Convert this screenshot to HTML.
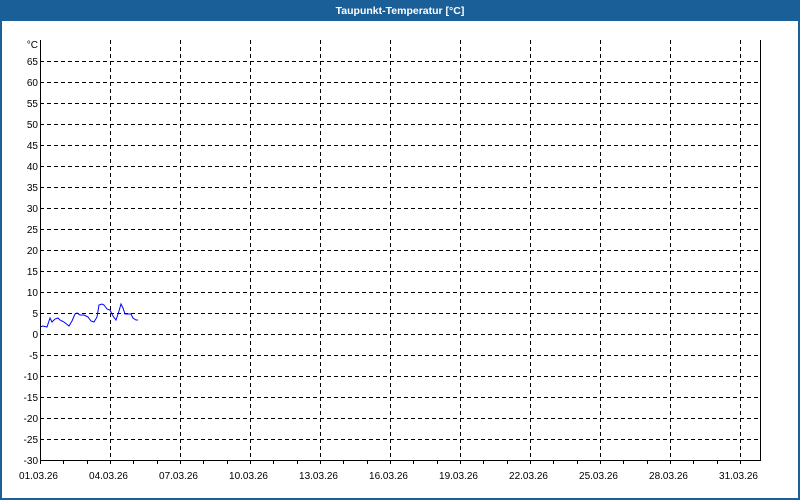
<!DOCTYPE html>
<html><head><meta charset="utf-8"><style>
html,body{margin:0;padding:0;width:800px;height:500px;overflow:hidden;background:#fff;font-family:"Liberation Sans",sans-serif}
</style></head><body>
<svg width="800" height="500" xmlns="http://www.w3.org/2000/svg" font-family="Liberation Sans, sans-serif" font-size="10">
<rect x="0" y="0" width="800" height="500" fill="#1b5f98"/>
<rect x="2" y="21" width="796" height="477" fill="#fff"/>
<text x="400" y="14" fill="#fff" font-weight="bold" font-size="10.5" text-anchor="middle">Taupunkt-Temperatur [°C]</text>
<g id="grid" stroke="#000" stroke-width="1" stroke-dasharray="4,3" shape-rendering="crispEdges">
</g>
<g id="labels"></g>
<polyline fill="none" stroke="#0000ff" stroke-width="1" points="40,327 43,326 47,327 50,318 52,322 55,319 58,318 60,320 64,322 69,326 72,321 75,314 77,313 80,315 84,315 88,317 91,321 94,322 97,317 99,305 102,304 104,305 107,309 110,310 113,316 116,320 119,311 121,304 123,308 125,314 128,314 131,314 133,318 136,320 138,320"/>
<path d="M40.5 40 V460.5 H760.5 V40" fill="none" stroke="#000" stroke-width="1" shape-rendering="crispEdges"/>
<text x="38" y="48" text-anchor="end" fill="#000">°C</text>
</svg>
<script>
var s=document.querySelector('svg'),g=document.getElementById('grid'),L=document.getElementById('labels'),ns='http://www.w3.org/2000/svg';
function el(t,a,p){var e=document.createElementNS(ns,t);for(var k in a)e.setAttribute(k,a[k]);(p||s).appendChild(e);return e;}
for(var v=-25;v<=65;v+=5){var y=Math.round(460-(v+30)*4.2)+0.5;el('line',{x1:40,x2:760,y1:y,y2:y},g);}
for(var v=-30;v<=65;v+=5){var y=Math.round(460-(v+30)*4.2);var t=el('text',{x:38,y:y+4,'text-anchor':'end',fill:'#000'},L);t.textContent=v;}
for(var d=0;d<=30;d++){var x=Math.round(40+d*23.333)+0.5;
 el('line',{x1:x,x2:x,y1:460,y2:464,stroke:'#000','shape-rendering':'crispEdges'});
 if(d%3==0){ if(d>0) el('line',{x1:x,x2:x,y1:40,y2:460},g);
  var t=el('text',{x:x-2,y:479,'text-anchor':'middle',fill:'#000'},L);var dd=d+1;t.textContent=(dd<10?'0':'')+dd+'.03.26';}}
</script>
</body></html>
